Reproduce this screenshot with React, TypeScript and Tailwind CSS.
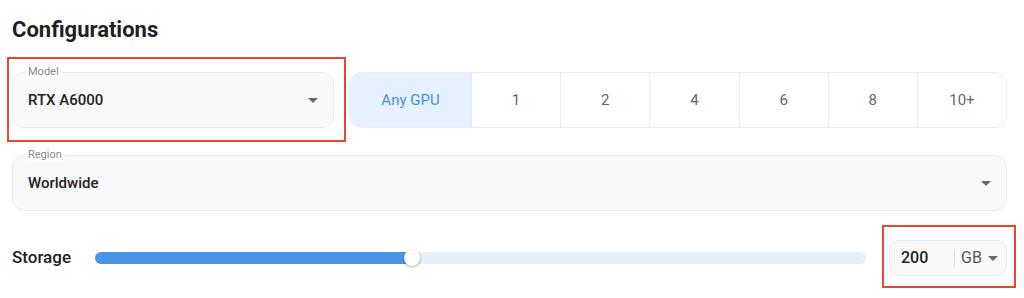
import { useState } from "react";

const gpuCounts = ["Any GPU", "1", "2", "4", "6", "8", "10+"];

function Caret() {
  return (
    <svg width="10" height="5" viewBox="0 0 10 5" className="shrink-0">
      <path d="M0 0h10L5 5z" fill="#6b6b6b" />
    </svg>
  );
}

interface SelectBoxProps {
  label: string;
  value: string;
}

function SelectBox({ label, value }: SelectBoxProps) {
  return (
    <div className="relative flex h-[56px] w-full items-center justify-between rounded-[12px] border border-[#e4eef9] bg-[#f9f9f9] pr-[15px] pl-[15px]">
      <span className="absolute -top-[8px] left-[12px] bg-white px-[3px] text-[11px] leading-[14px] text-[#8a8a8a]">
        {label}
      </span>
      <span className="text-[15px] font-medium text-[#222]">{value}</span>
      <Caret />
    </div>
  );
}

export default function App() {
  const [selected, setSelected] = useState(0);
  const storage = 41.1;

  return (
    <div
      className="h-[298px] w-full bg-white pr-[17px] pl-[12px]"
      style={{ fontFamily: "Roboto, 'Liberation Sans', sans-serif" }}
    >
      <h2 className="pt-[16px] text-[22px] leading-[28px] font-bold text-[#1f1f1f]">
        Configurations
      </h2>

      <div className="mt-[28px] flex">
        <div className="relative w-[322px] shrink-0">
          <SelectBox label="Model" value="RTX A6000" />
          <div className="pointer-events-none absolute -top-[15px] -right-[12px] -bottom-[14px] -left-[5px] border-2 border-[#e5472f]" />
        </div>

        <div className="ml-[15px] flex h-[56px] flex-1 overflow-hidden rounded-[12px] border border-[#e4eef9]">
          {gpuCounts.map((c, i) => (
            <button
              key={c}
              onClick={() => setSelected(i)}
              className={`flex items-center justify-center text-[15px] ${
                i === 0 ? "w-[121px]" : "flex-1 border-l border-[#e4eef9]"
              } ${
                selected === i
                  ? "bg-[#e5f1fc] text-[#4a8fe0]"
                  : "bg-white text-[#666]"
              }`}
            >
              {c}
            </button>
          ))}
        </div>
      </div>

      <div className="mt-[27px]">
        <SelectBox label="Region" value="Worldwide" />
      </div>

      <div className="mt-[29px] flex h-[36px] items-center">
        <span className="w-[83px] shrink-0 text-[17px] font-medium text-[#222]">
          Storage
        </span>
        <div className="relative h-[12px] flex-1 rounded-full bg-[#e4f0fb]">
          <div
            className="h-full rounded-full bg-[#4a94e8]"
            style={{ width: `${storage}%` }}
          />
          <div
            className="absolute top-1/2 h-[16px] w-[16px] -translate-x-1/2 -translate-y-1/2 rounded-full bg-white shadow-[0_1px_3px_rgba(0,0,0,0.35)]"
            style={{ left: `${storage}%` }}
          />
        </div>
        <div className="relative ml-[23px] w-[118px] shrink-0">
          <div className="flex h-[36px] items-center rounded-[10px] border border-[#e4eef9] bg-[#f9f9f9] pl-[11px]">
            <span className="w-[53px] text-[16px] font-medium text-[#222]">
              200
            </span>
            <span className="h-[18px] w-px bg-[#d5e5f6]" />
            <span className="ml-[6px] text-[16px] text-[#555]">GB</span>
            <span className="ml-[6px]">
              <Caret />
            </span>
          </div>
          <div className="pointer-events-none absolute -top-[15px] -right-[9px] -bottom-[12px] -left-[7px] border-2 border-[#e5472f]" />
        </div>
      </div>
    </div>
  );
}
